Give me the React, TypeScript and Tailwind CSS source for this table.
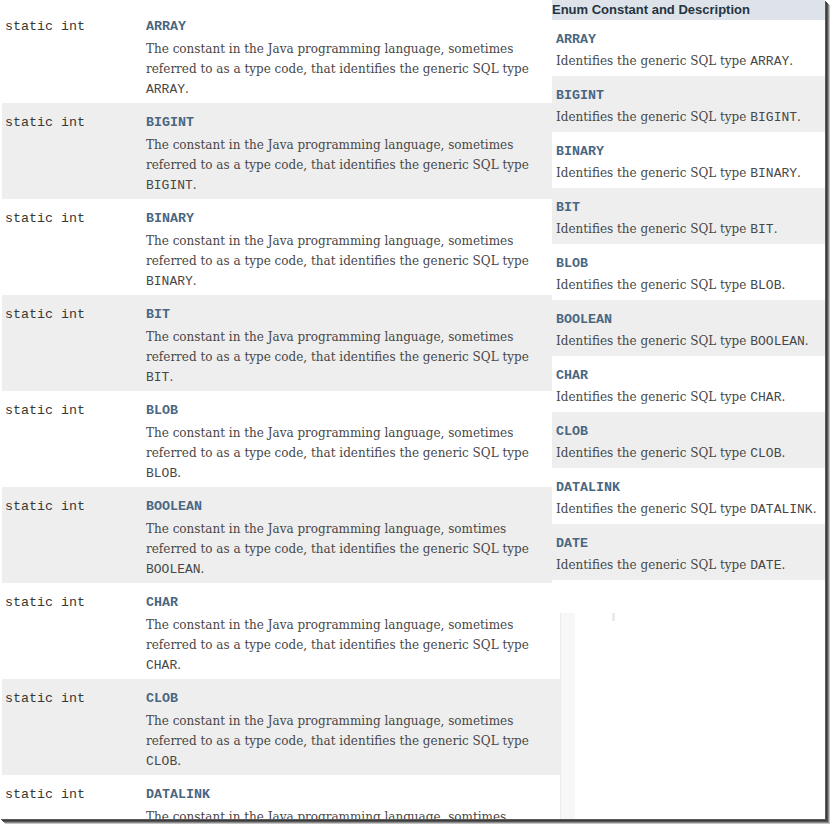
const mono = "font-['Liberation_Mono','Courier_New',monospace]"
const serif = "font-['DejaVu_Serif',serif]"

type Field = { name: string; sometimes: string }

const fields: Field[] = [
  { name: 'ARRAY', sometimes: 'sometimes' },
  { name: 'BIGINT', sometimes: 'sometimes' },
  { name: 'BINARY', sometimes: 'sometimes' },
  { name: 'BIT', sometimes: 'sometimes' },
  { name: 'BLOB', sometimes: 'sometimes' },
  { name: 'BOOLEAN', sometimes: 'somtimes' },
  { name: 'CHAR', sometimes: 'sometimes' },
  { name: 'CLOB', sometimes: 'sometimes' },
  { name: 'DATALINK', sometimes: 'somtimes' },
]

const enums = ['ARRAY', 'BIGINT', 'BINARY', 'BIT', 'BLOB', 'BOOLEAN', 'CHAR', 'CLOB', 'DATALINK', 'DATE']

function FieldRow({ field, gray }: { field: Field; gray: boolean }) {
  return (
    <div className={`flex h-[96px] shrink-0 ${gray ? 'bg-[#eeeeee]' : 'bg-white'}`}>
      <div className={`w-[144px] shrink-0 pl-[3px] pt-[12px] text-[13.33px] leading-[16px] text-[#353833] ${mono}`}>
        static int
      </div>
      <div className="pt-[12px]">
        <div className={`text-[13.33px] leading-[16px] font-bold text-[#4a6782] ${mono}`}>{field.name}</div>
        <div className={`mt-[4px] text-[12px] leading-[20px] text-[#474747] whitespace-nowrap ${serif}`}>
          The constant in the Java programming language, {field.sometimes}
          <br />
          referred to as a type code, that identifies the generic SQL type
          <br />
          <code className={`text-[13px] ${mono}`}>{field.name}</code>.
        </div>
      </div>
    </div>
  )
}

function EnumRow({ name, gray }: { name: string; gray: boolean }) {
  return (
    <div className={`h-[56px] pl-[4px] pt-[12px] ${gray ? 'bg-[#eeeeee]' : 'bg-white'}`}>
      <div className={`text-[13.33px] leading-[16px] font-bold text-[#4a6782] ${mono}`}>{name}</div>
      <div className={`mt-[3px] text-[12px] leading-[20px] text-[#474747] whitespace-nowrap ${serif}`}>
        Identifies the generic SQL type <code className={`text-[13px] ${mono}`}>{name}</code>.
      </div>
    </div>
  )
}

export default function App() {
  return (
    <div className="w-[830px] h-[824px] bg-white">
      <div className="relative w-[825px] h-[819px] overflow-hidden bg-white shadow-[1px_1px_0_#5a5a5a,2px_2px_0_#3c3c3c,3px_3px_0_#555555,4px_4px_0_#8a8a8a,5px_5px_0_#c4c4c4]">
        {/* old field summary */}
        <div className="flex">
          <div className="ml-[2px] w-[558px] pt-[7px] flex flex-col">
            {fields.map((f, i) => (
              <FieldRow key={f.name} field={f} gray={i % 2 === 1} />
            ))}
          </div>
          <div className="mt-[613px] w-[15px] h-[220px] bg-[#f7f7f7] border-l border-[#ececec]" />
          <div className="mt-[613px] ml-[37px] w-[3px] h-[8px] bg-[#ebebeb]" />
        </div>

        {/* enum panel pasted over it */}
        <div className="absolute left-[552px] top-0 w-[273px] h-[613px] bg-white">
          <div className="h-[20px] bg-[#dee3e9] text-[13px] leading-[20px] font-bold text-[#253441] font-['Liberation_Sans',sans-serif]">
            Enum Constant and Description
          </div>
          {enums.map((e, i) => (
            <EnumRow key={e} name={e} gray={i % 2 === 1} />
          ))}
        </div>
      </div>
    </div>
  )
}
